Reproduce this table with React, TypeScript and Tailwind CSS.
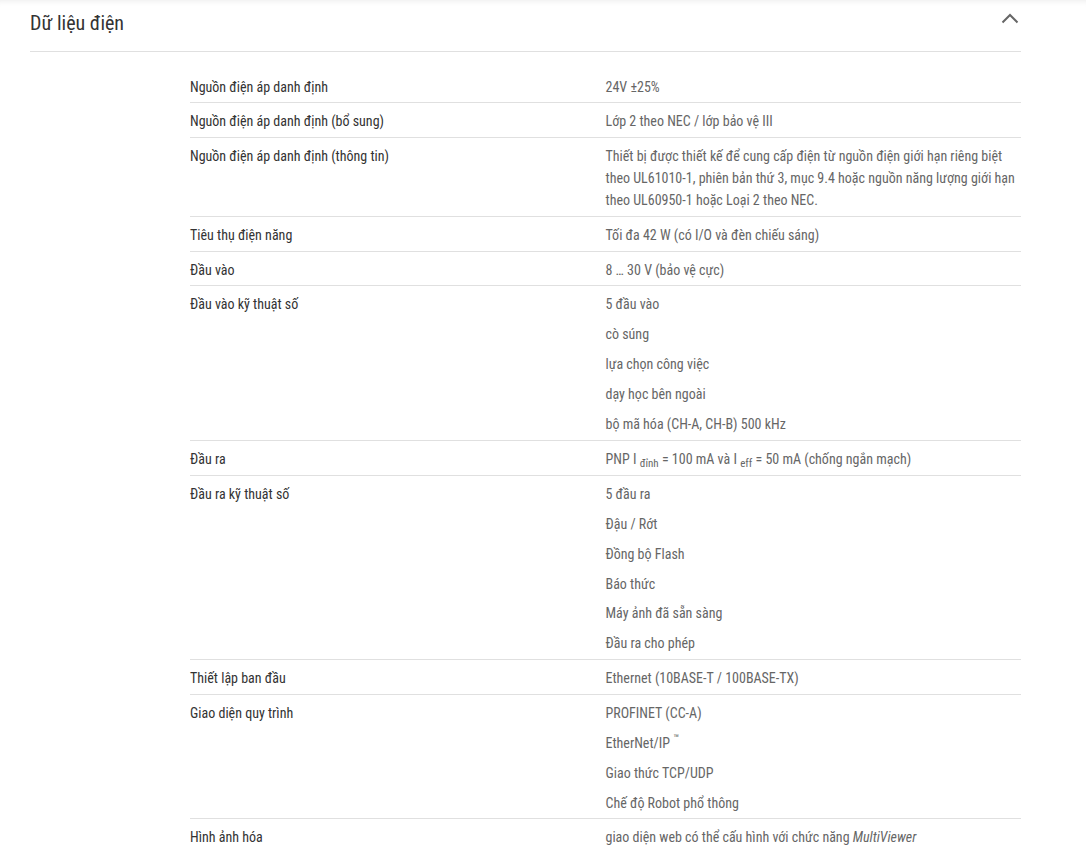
import React from "react";

type Row = { label: string; value: React.ReactNode[] };

const rows: Row[] = [
  { label: "Nguồn điện áp danh định", value: ["24V ±25%"] },
  { label: "Nguồn điện áp danh định (bổ sung)", value: ["Lớp 2 theo NEC / lớp bảo vệ III"] },
  {
    label: "Nguồn điện áp danh định (thông tin)",
    value: [
      "Thiết bị được thiết kế để cung cấp điện từ nguồn điện giới hạn riêng biệt theo UL61010-1, phiên bản thứ 3, mục 9.4 hoặc nguồn năng lượng giới hạn theo UL60950-1 hoặc Loại 2 theo NEC.",
    ],
  },
  { label: "Tiêu thụ điện năng", value: ["Tối đa 42 W (có I/O và đèn chiếu sáng)"] },
  { label: "Đầu vào", value: ["8 … 30 V (bảo vệ cực)"] },
  {
    label: "Đầu vào kỹ thuật số",
    value: ["5 đầu vào", "cò súng", "lựa chọn công việc", "dạy học bên ngoài", "bộ mã hóa (CH-A, CH-B) 500 kHz"],
  },
  {
    label: "Đầu ra",
    value: [
      <span key="o">
        PNP I <sub className="text-[11px]">đỉnh</sub> = 100 mA và I <sub className="text-[11px]">eff</sub> = 50 mA (chống ngắn mạch)
      </span>,
    ],
  },
  {
    label: "Đầu ra kỹ thuật số",
    value: ["5 đầu ra", "Đậu / Rớt", "Đồng bộ Flash", "Báo thức", "Máy ảnh đã sẵn sàng", "Đầu ra cho phép"],
  },
  { label: "Thiết lập ban đầu", value: ["Ethernet (10BASE-T / 100BASE-TX)"] },
  {
    label: "Giao diện quy trình",
    value: [
      "PROFINET (CC-A)",
      <span key="e">
        EtherNet/IP <sup className="text-[11px]">™</sup>
      </span>,
      "Giao thức TCP/UDP",
      "Chế độ Robot phổ thông",
    ],
  },
  {
    label: "Hình ảnh hóa",
    value: [
      <span key="m">
        giao diện web có thể cấu hình với chức năng <i>MultiViewer</i>
      </span>,
    ],
  },
];

export default function App() {
  return (
    <div
      className="min-h-[863px] bg-white shadow-[inset_0_7px_6px_-6px_rgba(0,0,0,0.08)]"
      style={{ fontFamily: "'Roboto Condensed', Roboto, 'Liberation Sans', sans-serif" }}
    >
      <div className="ml-[30px] w-[991px]">
        <div className="flex items-start justify-between border-b border-[#e0e0e0] pt-[11px] pb-[16px]">
          <h2 className="text-[20px] leading-[24px] text-[#333]">Dữ liệu điện</h2>
          <svg width="18" height="12" viewBox="0 0 18 12" className="mt-[1px] mr-[2px]">
            <path d="M1.5 10.5 L9 3 L16.5 10.5" fill="none" stroke="#666" strokeWidth="2" />
          </svg>
        </div>
        <div className="ml-[160px] mt-[16.6px] w-[831px] text-[14px] leading-[22.15px]">
          {rows.map((r, i) => (
            <div
              key={i}
              className={`grid grid-cols-2 pt-[7px] pb-[4.55px] ${i < rows.length - 1 ? "border-b border-[#e0e0e0]" : ""}`}
            >
              <div className="text-[#333]">{r.label}</div>
              <div className="flex flex-col gap-[7.8px] text-[#666]">
                {r.value.map((v, j) => (
                  <div key={j}>{v}</div>
                ))}
              </div>
            </div>
          ))}
        </div>
      </div>
    </div>
  );
}
